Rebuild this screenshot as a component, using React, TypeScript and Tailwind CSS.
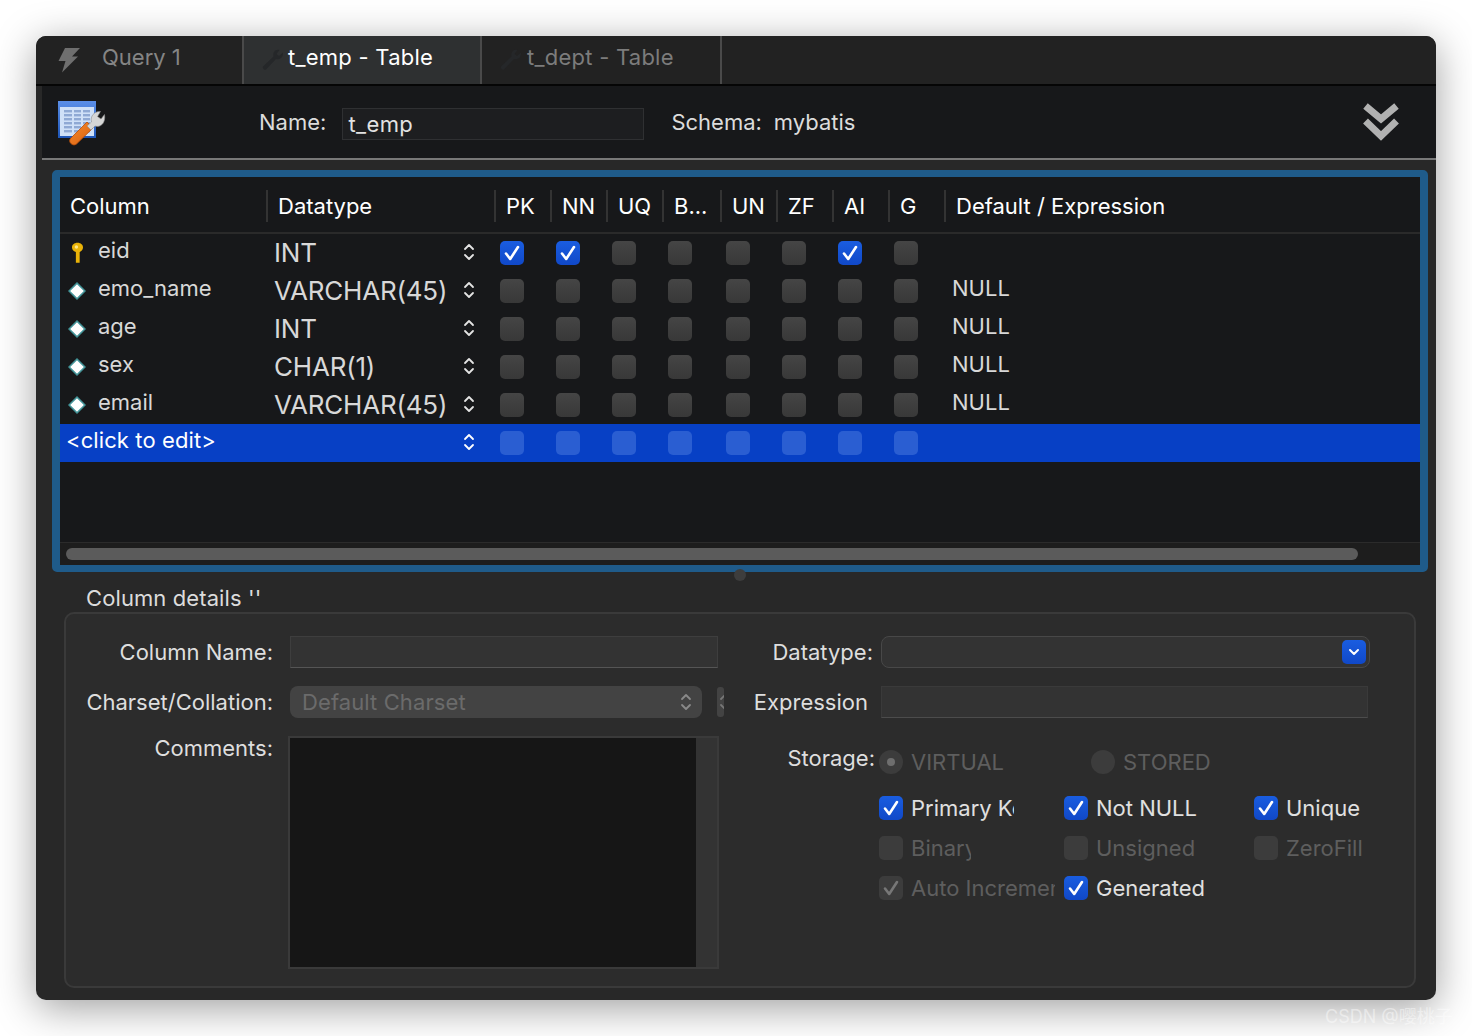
import type { ReactNode } from 'react';

const FONT = "font-['Inter','Noto_Sans_CJK_SC',sans-serif]";

const columnWidths = [56, 56, 56, 58, 56, 56, 56, 56];
const flagHeaders = ['PK', 'NN', 'UQ', 'B...', 'UN', 'ZF', 'AI', 'G'];

const rows = [
  { name: 'eid', type: 'INT', def: '', key: true, flags: [0, 1, 6] },
  { name: 'emo_name', type: 'VARCHAR(45)', def: 'NULL', key: false, flags: [] },
  { name: 'age', type: 'INT', def: 'NULL', key: false, flags: [] },
  { name: 'sex', type: 'CHAR(1)', def: 'NULL', key: false, flags: [] },
  { name: 'email', type: 'VARCHAR(45)', def: 'NULL', key: false, flags: [] },
];

const CheckMark = ({ color = '#ffffff' }: { color?: string }) => (
  <svg width="20" height="20" viewBox="0 0 20 20" fill="none">
    <path d="M4 10.5 L8.2 16 L16 4" stroke={color} strokeWidth="2.6" strokeLinecap="round" strokeLinejoin="round" />
  </svg>
);

const Check = ({ on = false, tint = false }: { on?: boolean; tint?: boolean }) => {
  let cls = 'bg-gradient-to-b from-[#454545] to-[#383838]';
  if (on) cls = 'bg-gradient-to-b from-[#1a5de0] to-[#1048c8]';
  if (tint) cls = 'bg-[#2a5ed2]';
  return (
    <span className={`w-6 h-6 rounded-[5px] flex items-center justify-center shrink-0 ${cls}`}>
      {on && <CheckMark />}
    </span>
  );
};

const Stepper = ({ color = '#e4e4e4', className = '' }: { color?: string; className?: string }) => (
  <svg width="12" height="20" viewBox="0 0 12 20" fill="none" className={`shrink-0 ${className}`}>
    <path d="M2 7 L6 3 L10 7 M2 13 L6 17 L10 13" stroke={color} strokeWidth="1.8" strokeLinecap="round" strokeLinejoin="round" />
  </svg>
);

const Bolt = () => (
  <svg width="22" height="26" viewBox="0 0 22 26">
    <path d="M7 1 L22 1 L14 9.5 L20 9.5 L4 25.5 L7.5 14 L0.5 14 Z" fill="#6f6f6f" />
  </svg>
);

const Wrench = () => (
  <svg width="22" height="22" viewBox="0 0 22 22">
    <path d="M21 3.5 L17 7 L14.5 5 L17.5 1 C13.5 0 10.5 3 11.5 7.5 L1 17.5 C0 19 2.5 21.5 4 20.5 L14 10 C18.5 11 21.5 8 21 3.5 Z" fill="#252729" />
  </svg>
);

const TableIcon = () => (
  <svg width="48" height="46" viewBox="0 0 48 46">
    <defs>
      <linearGradient id="tbar" x1="0" y1="0" x2="0" y2="1">
        <stop offset="0" stopColor="#5b8fe8" />
        <stop offset="1" stopColor="#1e56b8" />
      </linearGradient>
      <linearGradient id="orange" x1="0" y1="0" x2="1" y2="1">
        <stop offset="0" stopColor="#f58a2c" />
        <stop offset="1" stopColor="#d95f10" />
      </linearGradient>
    </defs>
    <rect x="0" y="0" width="38" height="37" fill="url(#tbar)" />
    <rect x="2" y="6" width="34" height="29" fill="#cfe0f7" />
    {[0, 1, 2, 3, 4, 5].map((r) => (
      <g key={r} fill="#8fa9d4">
        <rect x="6" y={9 + r * 4} width="8" height="2.4" />
        <rect x="16" y={9 + r * 4} width="7" height="2.4" />
        <rect x="25" y={9 + r * 4} width="7" height="2.4" />
      </g>
    ))}
    <path d="M12.5 37.5 L29 21 L35 27 L18.5 43 C15 46 9.5 41 12.5 37.5 Z" fill="url(#orange)" stroke="#b84e0a" strokeWidth="0.8" />
    <path d="M46.5 13.5 L43 18 L39.5 15.5 L42.5 10.5 C36 10 32 15.5 33.5 21 L29 25 L33 29 L37 25 C42.5 27 48 22 46.5 13.5 Z" fill="#d6d6d6" stroke="#8d8d8d" strokeWidth="0.6" />
  </svg>
);

const KeyIcon = () => (
  <svg width="13" height="22" viewBox="0 0 12 20">
    <path d="M6 0.5 C9.5 0.5 11.5 3 11 5.5 C10.6 7.6 9 8.5 8 9 L8 19 L4.5 19 L4.5 9 C3 8.5 1.4 7.6 1 5.5 C0.5 3 2.5 0.5 6 0.5 Z" fill="#eab308" />
    <circle cx="5" cy="4.5" r="1.6" fill="#fde68a" />
  </svg>
);

const DiamondIcon = () => (
  <span className="w-[18px] h-[18px] flex items-center justify-center shrink-0">
    <svg width="18" height="18" viewBox="0 0 18 18">
      <path d="M9 0 L18 9 L9 18 L0 9 Z" fill="#4fb3b8" opacity="0.8" />
      <path d="M9 2.2 L15.8 9 L9 15.8 L2.2 9 Z" fill="#ffffff" />
    </svg>
  </span>
);

const DoubleChevron = () => (
  <svg width="38" height="42" viewBox="0 0 38 42" fill="none">
    <path d="M3.5 4 L19 17 L34.5 4 M3.5 19 L19 34 L34.5 19" stroke="#b1b1b1" strokeWidth="7" strokeLinejoin="miter" />
  </svg>
);

const Tab = ({ width, icon, active, children, textClass }: { width: string; icon: ReactNode; active?: boolean; children: ReactNode; textClass: string }) => (
  <div className={`h-full ${width} flex items-center border-r-2 border-[#4a4a4a] shrink-0 ${active ? 'bg-[#2e3031]' : ''}`}>
    {icon}
    <span className={`-mt-1.5 ${textClass}`}>{children}</span>
  </div>
);

const Label = ({ width, children, className = '' }: { width: string; children: ReactNode; className?: string }) => (
  <span className={`${width} text-right text-[22px] text-[#dedede] shrink-0 ${className}`}>{children}</span>
);

const Option = ({ width, textWidth, on, muted, label, dim }: { width: string; textWidth: string; on?: boolean; muted?: boolean; label: string; dim?: boolean }) => (
  <div className={`${width} h-6 flex items-center shrink-0`}>
    <span className={`w-6 h-6 rounded-[5px] flex items-center justify-center shrink-0 ${muted ? 'bg-[#3c3c3c]' : on ? 'bg-gradient-to-b from-[#1a5de0] to-[#1048c8]' : 'bg-[#3c3c3c]'}`}>
      {on && <CheckMark color={muted ? '#777777' : '#ffffff'} />}
    </span>
    <span className={`ml-2 ${textWidth} overflow-hidden whitespace-nowrap text-[22px] ${dim ? 'text-[#5e5e5e]' : 'text-[#e0e0e0]'}`}>{label}</span>
  </div>
);

const Radio = ({ selected, label, width }: { selected?: boolean; label: string; width: string }) => (
  <div className={`${width} h-6 flex items-center shrink-0`}>
    <span className="w-6 h-6 rounded-full bg-[#3c3c3c] flex items-center justify-center shrink-0">
      {selected && <span className="w-2 h-2 rounded-full bg-[#6e6e6e]" />}
    </span>
    <span className="ml-2 text-[22px] text-[#5e5e5e]">{label}</span>
  </div>
);

export default function App() {
  return (
    <div className={`relative w-[1472px] h-[1036px] bg-white p-9 overflow-hidden ${FONT}`}>
      <div className="w-[1400px] h-[964px] rounded-[10px] bg-[#282828] overflow-hidden flex flex-col shadow-[0_8px_40px_rgba(0,0,0,0.38)]">
        {/* tabs */}
        <div className="h-[50px] shrink-0 bg-[#222222] border-b-2 border-[#050505] pl-1.5 flex items-stretch">
          <Tab width="w-[202px]" icon={<span className="ml-4 w-[22px]"><Bolt /></span>} textClass="ml-[22px] text-[22px] text-[#858585]">
            Query 1
          </Tab>
          <Tab width="w-[238px]" active icon={<span className="ml-[18px] w-[22px]"><Wrench /></span>} textClass="ml-1 text-[22px] tracking-[0.25px] text-white">
            t_emp - Table
          </Tab>
          <Tab width="w-[240px]" icon={<span className="ml-[18px] w-[22px]"><Wrench /></span>} textClass="ml-[5px] text-[22px] tracking-[0.25px] text-[#7c7c7c]">
            t_dept - Table
          </Tab>
        </div>

        {/* header */}
        <div className="h-[74px] shrink-0 ml-1.5 bg-[#17181a] border-b-2 border-[#787878] flex items-center pl-4 pr-9">
          <span className="mt-1"><TableIcon /></span>
          <span className="ml-[153px] text-[22px] text-[#dcdcdc]">Name:</span>
          <div className="ml-4 mt-1 w-[302px] h-8 bg-[#1d1e20] border border-[#2f3032] flex items-center pl-[5px] text-[22px] tracking-[0.4px] text-[#e2e2e2]">t_emp</div>
          <span className="ml-[27px] text-[22px] text-[#dcdcdc]">Schema:</span>
          <span className="ml-3 text-[22px] text-[#dcdcdc]">mybatis</span>
          <span className="ml-auto mt-[2px]"><DoubleChevron /></span>
        </div>

        {/* body */}
        <div className="flex-1 ml-1.5 flex flex-col pt-2.5">
          <div className="ml-2.5 mr-2 h-[402px] shrink-0 rounded-[5px] border-x-8 border-y-[7px] border-[#1f5b8a] bg-[#17181a] flex flex-col overflow-hidden">
            <div className="h-[57px] shrink-0 flex items-center border-b-2 border-[#2a2a2a] pt-[3px] text-[22px] text-white">
              <span className="w-[208px] pl-2.5 h-8 flex items-center border-r-2 border-[#333333] shrink-0">Column</span>
              <span className="w-[228px] pl-2.5 h-8 flex items-center border-r-2 border-[#333333] shrink-0">Datatype</span>
              {flagHeaders.map((h, i) => (
                <span key={h} style={{ width: columnWidths[i] }} className="pl-2.5 h-8 flex items-center border-r-2 border-[#333333] shrink-0">
                  {h}
                </span>
              ))}
              <span className="pl-2.5">Default / Expression</span>
            </div>

            {rows.map((r) => (
              <div key={r.name} className="h-[38px] shrink-0 flex items-center">
                <div className="w-[207px] shrink-0 flex items-center">
                  <span className="w-[38px] flex justify-center shrink-0 pr-[4px]">
                    {r.key ? <KeyIcon /> : <DiamondIcon />}
                  </span>
                  <span className="text-[22px] text-[#d8d8d8] -mt-[6px]">{r.name}</span>
                </div>
                <div className="w-[228px] shrink-0 flex items-center pl-[7px] pr-[20px] justify-between">
                  <span className="text-[26px] tracking-[-0.2px] text-[#d8d8d8] -mt-[2px]">{r.type}</span>
                  <Stepper className="-mt-[2px]" />
                </div>
                {columnWidths.map((w, i) => (
                  <div key={i} style={{ width: w }} className="pl-[5px] shrink-0">
                    <Check on={r.flags.includes(i)} />
                  </div>
                ))}
                <span className="pl-[7px] text-[22px] text-[#d8d8d8] -mt-[6px]">{r.def}</span>
              </div>
            ))}

            <div className="h-[38px] shrink-0 flex items-center bg-[#0740c5]">
              <div className="w-[207px] shrink-0 pl-1.5 text-[22px] tracking-[0.1px] text-white -mt-[6px]">&lt;click to edit&gt;</div>
              <div className="w-[228px] shrink-0 flex justify-end pr-[20px]"><Stepper color="#ffffff" className="-mt-[2px]" /></div>
              {columnWidths.map((w, i) => (
                <div key={i} style={{ width: w }} className="pl-[5px] shrink-0">
                  <Check tint />
                </div>
              ))}
            </div>

            <div className="flex-1" />
            <div className="h-[23px] shrink-0 bg-[#1d1d1d] border-t border-[#2b2b2b] flex items-center pl-1.5">
              <div className="w-[1292px] h-3 rounded-full bg-[#5b5b5b]" />
            </div>
          </div>

          <div className="h-2.5 shrink-0 flex justify-center pl-0.5">
            <span className="w-3 h-3 -mt-[3px] rounded-full bg-[#3d3d3d]" />
          </div>

          <div className="ml-11 h-[30px] shrink-0 flex items-center pt-[2px] text-[22px] tracking-[0.1px] text-[#dcdcdc]">Column details ''</div>

          <div className="ml-[22px] mr-5 h-[376px] shrink-0 rounded-[10px] border-2 border-[#3a3a3a] bg-[#2c2c2c] pt-[22px] flex">
            {/* left form */}
            <div className="w-[654px] shrink-0 flex flex-col">
              <div className="flex items-center h-8">
                <Label width="w-[207px]">Column Name:</Label>
                <div className="ml-[17px] w-[428px] h-8 shrink-0 bg-[#333333] border border-[#3e3e3e] border-b-[#555555]" />
              </div>
              <div className="flex items-center h-8 mt-[18px]">
                <Label width="w-[207px]">Charset/Collation:</Label>
                <div className="ml-[17px] w-[412px] h-8 shrink-0 rounded-lg bg-[#434343] flex items-center justify-between pl-3 pr-[10px]">
                  <span className="text-[22px] tracking-[0.1px] text-[#6b6b6b]">Default Charset</span>
                  <Stepper color="#8a8a8a" />
                </div>
                <span className="ml-[15px] w-[7px] h-[30px] shrink-0 rounded-[3px] bg-[#434343] overflow-hidden flex items-center justify-end">
                  <Stepper color="#777777" className="-mr-[7px]" />
                </span>
              </div>
              <div className="flex mt-[18px]">
                <Label width="w-[207px]" className="-mt-[4px]">Comments:</Label>
                <div className="ml-[15px] w-[431px] h-[233px] shrink-0 flex border-2 border-[#3a3a3a]">
                  <div className="w-[406px] bg-[#161616]" />
                  <div className="flex-1 bg-[#333333]" />
                </div>
              </div>
            </div>

            {/* right form */}
            <div className="flex-1 flex flex-col">
              <div className="flex items-center h-8">
                <Label width="w-[153px]">Datatype:</Label>
                <div className="ml-2 w-[489px] h-8 rounded-lg bg-[#333333] border border-[#484848] flex items-center justify-end pr-[3px]">
                  <span className="w-6 h-6 rounded-[5px] bg-gradient-to-b from-[#1a5de0] to-[#1048c8] flex items-center justify-center">
                    <svg width="12" height="8" viewBox="0 0 12 8" fill="none">
                      <path d="M2 2 L6 6 L10 2" stroke="#ffffff" strokeWidth="2" strokeLinecap="round" strokeLinejoin="round" />
                    </svg>
                  </span>
                </div>
              </div>
              <div className="flex items-center h-8 mt-[18px]">
                <Label width="w-[148px]">Expression</Label>
                <div className="ml-[13px] w-[487px] h-8 bg-[#333333] border border-[#3a3a3a] border-b-[#4c4c4c]" />
              </div>
              <div className="flex items-center h-6 mt-8">
                <Label width="w-[155px]" className="-mt-2">Storage:</Label>
                <div className="ml-1 flex">
                  <Radio selected label="VIRTUAL" width="w-[212px]" />
                  <Radio label="STORED" width="w-[200px]" />
                </div>
              </div>
              <div className="ml-[159px] mt-[22px] flex">
                <Option width="w-[185px]" textWidth="w-[103px]" on label="Primary Key" />
                <Option width="w-[190px]" textWidth="w-[120px]" on label="Not NULL" />
                <Option width="w-[130px]" textWidth="w-[90px]" on label="Unique" />
              </div>
              <div className="ml-[159px] mt-4 flex">
                <Option width="w-[185px]" textWidth="w-[60px]" muted dim label="Binary" />
                <Option width="w-[190px]" textWidth="w-[120px]" muted dim label="Unsigned" />
                <Option width="w-[130px]" textWidth="w-[90px]" muted dim label="ZeroFill" />
              </div>
              <div className="ml-[159px] mt-4 flex">
                <Option width="w-[185px]" textWidth="w-[144px]" on muted dim label="Auto Increment" />
                <Option width="w-[190px]" textWidth="w-[120px]" on label="Generated" />
              </div>
            </div>
          </div>
        </div>
      </div>

      <span className="absolute left-[1325px] top-[1003px] text-[18px] whitespace-nowrap text-white/45">CSDN @嘤桃子</span>
    </div>
  );
}
